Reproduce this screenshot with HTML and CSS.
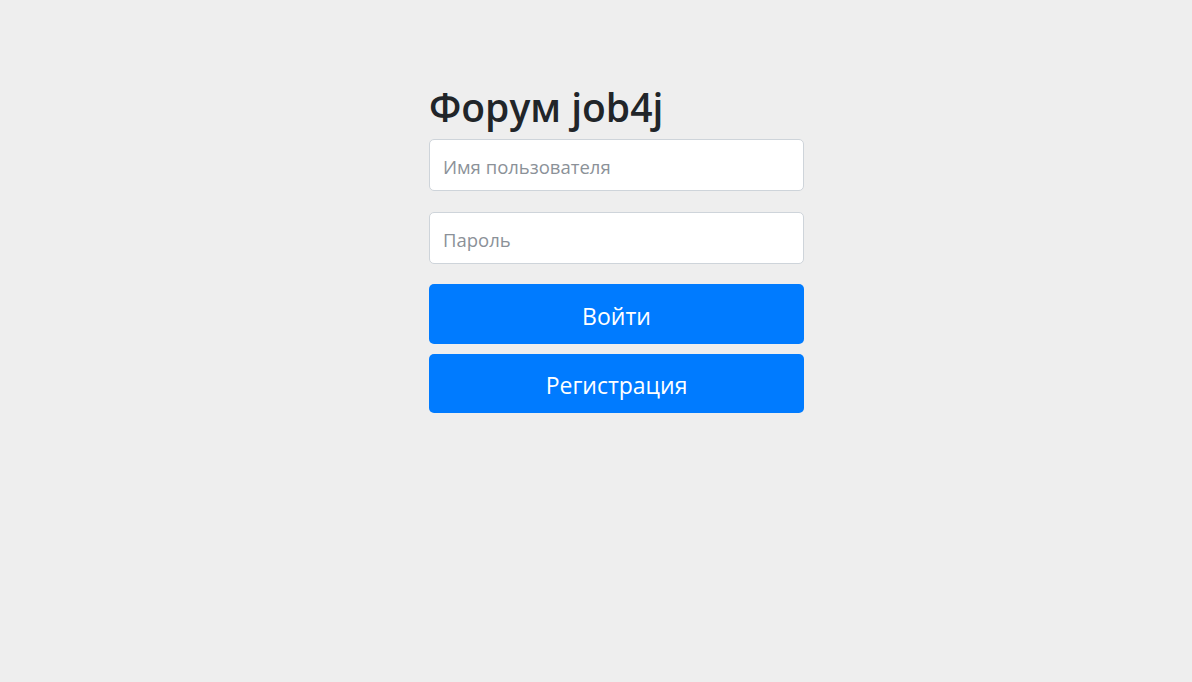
FILE: index.html
```html
<!DOCTYPE html>
<html lang="ru">
<head>
<meta charset="utf-8">
<title>Форум job4j</title>
<link rel="stylesheet" href="styles.css">
</head>
<body>
<main class="page">
  <form class="login">
    <h1 class="title">Форум job4j</h1>
    <input class="field field-user" type="text" placeholder="Имя пользователя">
    <input class="field field-pass" type="password" placeholder="Пароль">
    <button class="btn btn-login" type="button">Войти</button>
    <button class="btn btn-register" type="button">Регистрация</button>
  </form>
</main>
</body>
</html>
```
FILE: styles.css
```css
html, body {
  margin: 0;
  padding: 0;
  background: #eeeeee;
  height: 100%;
}
body {
  font-family: "Open Sans", "Noto Sans", sans-serif;
  color: #212529;
}
.page {
  display: flex;
  justify-content: center;
  padding: 83px 0 0 41px;
}
.login {
  width: 375px;
  display: flex;
  flex-direction: column;
}
.title {
  margin: 0 0 8px 0;
  font-size: 39px;
  font-weight: 600;
  line-height: 48px;
  letter-spacing: 0;
}
.field {
  box-sizing: border-box;
  height: 52px;
  padding: 2px 13px 0;
  border: 1px solid #ced4da;
  border-radius: 5px;
  background: #fff;
  font-family: inherit;
  font-size: 18.5px;
  color: #495057;
}
.field-user {
  margin: 0 0 21px 0;
}
.field-pass {
  margin: 0 0 20px 0;
}
.field::placeholder {
  color: #8b9198;
}
.btn {
  box-sizing: border-box;
  border: 0;
  border-radius: 5px;
  background: #007bff;
  color: #fff;
  font-family: inherit;
  font-size: 23px;
  padding: 3px 0 0;
}
.btn-login {
  height: 60px;
  margin: 0 0 10px 0;
}
.btn-register {
  height: 59px;
}
```
